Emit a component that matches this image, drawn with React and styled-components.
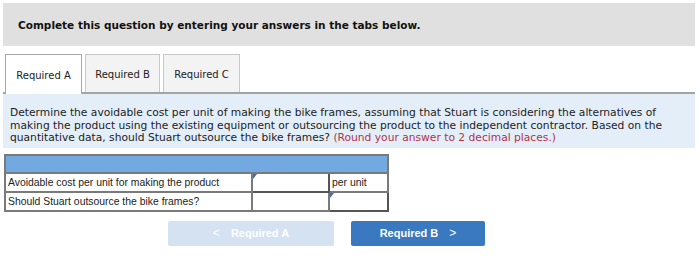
import React from "react";
import styled, { createGlobalStyle } from "styled-components";

const GlobalStyle = createGlobalStyle`
  html, body {
    margin: 0;
    padding: 0;
    background: #ffffff;
  }
  body {
    font-family: "DejaVu Sans", Verdana, sans-serif;
    color: #222;
  }
`;

const Page = styled.div`
  width: 700px;
  height: 258px;
  padding: 3px 5px 0 3px;
  box-sizing: border-box;
  overflow: hidden;
`;

const Banner = styled.div`
  height: 43px;
  background: #e0e0e0;
  display: flex;
  align-items: center;
  padding-left: 15px;
  font-size: 10.5px;
  font-weight: bold;
  color: #111;
`;

const TabBar = styled.div`
  display: flex;
  gap: 3px;
  margin-top: 8px;
  padding-left: 2px;
  border-bottom: 2px solid #a4a4a4;
  height: 38px;
`;

const Tab = styled.div`
  width: ${(p) => p.$w}px;
  height: ${(p) => (p.$active ? 40 : 38)}px;
  box-sizing: border-box;
  border: 1px solid ${(p) => (p.$active ? "#a8a8a8" : "#c8c8c8")};
  border-bottom: none;
  background: ${(p) => (p.$active ? "#ffffff" : "#f3f3f3")};
  display: flex;
  align-items: center;
  justify-content: center;
  padding-top: 2px;
  font-size: 10px;
  color: #222;
  position: relative;
  z-index: 1;
`;

const Prompt = styled.div`
  background: #e3eef9;
  padding: 13px 8px 3px 7px;
  font-size: 10.7px;
  line-height: 12.6px;
  color: #222;
  white-space: nowrap;
`;

const Hint = styled.span`
  color: #b5314b;
`;

const Grid = styled.table`
  margin: 6px 0 0 1px;
  border-collapse: collapse;
  font-family: "Liberation Sans", Arial, sans-serif;
  font-size: 10.4px;
  color: #222;
`;

const HeadCell = styled.td`
  height: 16px;
  padding: 0;
  background: #72a9e0;
  border: 2px solid #7a7a7a;
`;

const Cell = styled.td`
  width: ${(p) => p.$w}px;
  height: 19px;
  padding: 0 2px;
  border: 2px solid #7a7a7a;
  box-sizing: border-box;
  position: relative;
  ${(p) => p.$input && `border-color: #555;`}
`;

const Marker = styled.span`
  position: absolute;
  left: 0;
  top: 0;
  width: 0;
  height: 0;
  border-top: 5px solid #3b6fb0;
  border-right: 4px solid transparent;
`;

const Buttons = styled.div`
  display: flex;
  gap: 17px;
  margin-top: 9px;
  padding-left: 165px;
`;

const NavButton = styled.div`
  width: ${(p) => p.$w}px;
  height: 25px;
  display: flex;
  align-items: center;
  justify-content: center;
  gap: 11px;
  font-family: "Liberation Sans", Arial, sans-serif;
  font-size: 11px;
  font-weight: bold;
  color: #ffffff;
  background: ${(p) => (p.$disabled ? "#d4e2f1" : "#3a78bf")};
  border-radius: 2px;
`;

const Chevron = styled.span`
  font-size: 12px;
  font-weight: normal;
`;

export default function App() {
  return (
    <Page>
      <GlobalStyle />
      <Banner>Complete this question by entering your answers in the tabs below.</Banner>
      <TabBar>
        <Tab $w={77} $active>Required A</Tab>
        <Tab $w={75}>Required B</Tab>
        <Tab $w={77}>Required C</Tab>
      </TabBar>
      <Prompt>
        Determine the avoidable cost per unit of making the bike frames, assuming that Stuart is considering the alternatives of
        <br />
        making the product using the existing equipment or outsourcing the product to the independent contractor. Based on the
        <br />
        quantitative data, should Stuart outsource the bike frames? <Hint>(Round your answer to 2 decimal places.)</Hint>
      </Prompt>
      <Grid>
        <tbody>
          <tr>
            <HeadCell colSpan={3} />
          </tr>
          <tr>
            <Cell $w={247}>Avoidable cost per unit for making the product</Cell>
            <Cell $w={77} $input>
              <Marker />
            </Cell>
            <Cell $w={59}>per unit</Cell>
          </tr>
          <tr>
            <Cell $w={247}>Should Stuart outsource the bike frames?</Cell>
            <Cell $w={77} />
            <Cell $w={59} $input>
              <Marker />
            </Cell>
          </tr>
        </tbody>
      </Grid>
      <Buttons>
        <NavButton $w={166} $disabled>
          <Chevron>&lt;</Chevron>Required A
        </NavButton>
        <NavButton $w={134}>
          Required B<Chevron>&gt;</Chevron>
        </NavButton>
      </Buttons>
    </Page>
  );
}
